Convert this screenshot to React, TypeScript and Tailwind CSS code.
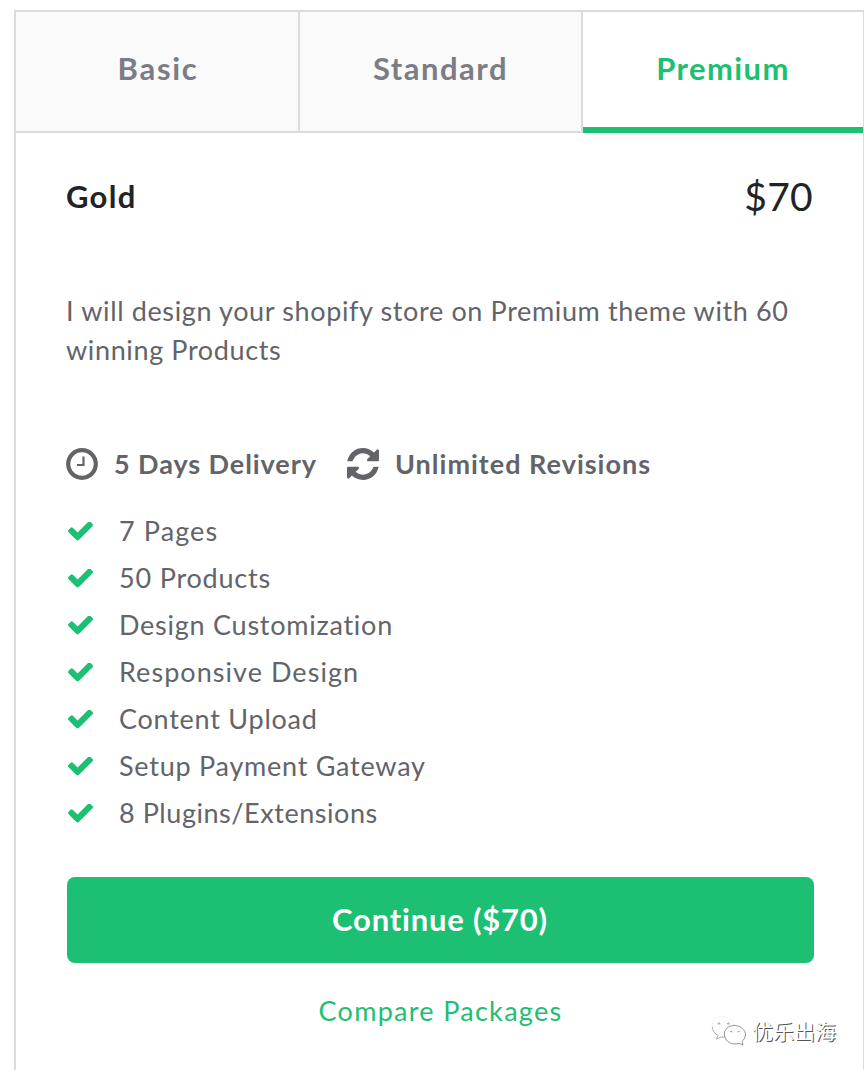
import { useState } from 'react';

const tabs = [
  { name: 'Basic', width: 'w-[284px]', tracking: 'pl-[2px] tracking-[1.7px]' },
  { name: 'Standard', width: 'w-[283px]', tracking: 'tracking-[1.5px]' },
  { name: 'Premium', width: 'w-[280px]', tracking: 'tracking-[1.4px]' },
];

const features = [
  { label: '7 Pages', tracking: 'tracking-[1.1px]' },
  { label: '50 Products', tracking: 'tracking-[0.8px]' },
  { label: 'Design Customization', tracking: 'tracking-[0.75px]' },
  { label: 'Responsive Design', tracking: 'tracking-[1.05px]' },
  { label: 'Content Upload', tracking: 'tracking-[0.75px]' },
  { label: 'Setup Payment Gateway', tracking: 'tracking-[0.75px]' },
  { label: '8 Plugins/Extensions', tracking: 'tracking-[0.55px]' },
];

function ClockIcon() {
  return (
    <svg className="size-8 shrink-0" viewBox="0 0 32 32" fill="none" stroke="currentColor">
      <circle cx="16" cy="16" r="13.8" strokeWidth="4.2" />
      <path d="M17.500 8.500V17H11" strokeWidth="2.2" />
    </svg>
  );
}

function RefreshIcon() {
  return (
    <svg className="size-8 shrink-0" viewBox="128 128 1536 1536" fill="currentColor">
      <path d="M1639 1056q0 5-1 7-64 268-268 434.5t-478 166.5q-146 0-282.5-55t-243.5-157l-129 129q-19 19-45 19t-45-19-19-45v-448q0-26 19-45t45-19h448q26 0 45 19t19 45-19 45l-137 137q71 66 161 102t187 36q134 0 250-65t186-179q11-17 53-117 8-23 30-23h192q13 0 22.5 9.5t9.5 22.5zm25-800v448q0 26-19 45t-45 19h-448q-26 0-45-19t-19-45 19-45l138-138q-148-137-349-137-134 0-250 65t-186 179q-11 17-53 117-8 23-30 23h-199q-13 0-22.5-9.5t-9.5-22.5v-7q65-268 270-434.5t480-166.5q146 0 284 55.5t245 156.5l130-129q19-19 45-19t45 19 19 45z" />
    </svg>
  );
}

function CheckIcon() {
  return (
    <svg className="h-[19px] w-[25px] shrink-0 text-[#1dbf73]" viewBox="121 398 1550 1124" fill="currentColor">
      <path d="M1671 566q0 40-28 68l-724 724-136 136q-28 28-68 28t-68-28l-136-136-362-362q-28-28-28-68t28-68l136-136q28-28 68-28t68 28l294 295 656-657q28-28 68-28t68 28l136 136q28 28 28 68z" />
    </svg>
  );
}

// Two overlapping chat bubbles, outline only
function Bubbles() {
  return (
    <svg className="h-[31px] w-9" viewBox="0 0 36 31" fill="none" strokeWidth="0.8">
      <path d="M1.300 13C0 5 7 1.500 12 1.500S22 5 23 10" stroke="#ddd" strokeDasharray="1 1" />
      <path d="M1.300 12Q2 18 7 20.500L5.500 24L10 22H14" stroke="#999" />
      <path d="M6.800 9q1.200-3 2.400 0M16.300 9q1.200-3 2.400 0M6.800 9h2.400M16.300 9h2.400" stroke="#999" />
      <path d="M13.500 20.500C12.500 14 18 10.500 23.500 10.500S35 15 34.500 20Q34 24 31 26.500L32 30L28 28.300C21 30.500 14.500 27 13.500 20.500Z" stroke="#777" fill="white" />
      <path d="M19 17q1.200-1.500 2.400 0M26.500 17q1.200-1.500 2.400 0" stroke="#777" />
    </svg>
  );
}

export default function App() {
  const [active, setActive] = useState('Premium');

  return (
    <div className="relative h-[1070px] w-[864px] overflow-hidden bg-white pt-[10px] pl-[14px] font-['Lato',sans-serif] text-[#62646a]">
      <div className="h-[1060px] w-[850px] border-t-2 border-r border-l-2 border-[#dadbdd]">
        {/* Package tabs */}
        <div className="flex h-[121px]">
          {tabs.map((tab) => (
            <button
              key={tab.name}
              onClick={() => setActive(tab.name)}
              className={`${tab.width} ${tab.tracking} text-[31px] font-bold ${
                active === tab.name
                  ? 'border-b-[6px] border-[#1dbf73] bg-white pb-[2px] text-[#1dbf73]'
                  : 'border-r-2 border-b-2 border-[#dadbdd] bg-[#fafafa] pb-[6px] text-[#7a7d85]'
              }`}
            >
              {tab.name}
            </button>
          ))}
        </div>

        <div className="pr-[50px] pl-[50px]">
          <div className="flex h-[130px] items-center justify-between pb-[3px] text-[#222325]">
            <h3 className="text-[31px] font-bold tracking-[1.3px]">Gold</h3>
            <span className="text-[39px] tracking-[0.3px]">$70</span>
          </div>

          <p className="mt-[28px] text-[27px] leading-[39px] tracking-[0.63px] whitespace-nowrap">
            I will design your shopify store on Premium theme with 60
            <br />
            winning Products
          </p>

          <div className="mt-[75px] flex h-10 items-center text-[27px] font-bold whitespace-nowrap">
            <ClockIcon />
            <span className="ml-4 w-[233px] tracking-[0.92px]">5 Days Delivery</span>
            <RefreshIcon />
            <span className="ml-4 tracking-[1px]">Unlimited Revisions</span>
          </div>

          <ul className="mt-[24px]">
            {features.map((feature) => (
              <li key={feature.label} className="flex h-[47px] items-center gap-[26px] pl-[2px] text-[27px]">
                <CheckIcon />
                <span className={feature.tracking}>{feature.label}</span>
              </li>
            ))}
          </ul>

          <button className="mt-[40px] ml-[0.5px] h-[86px] w-[747px] rounded-lg bg-[#1dbf73] pb-[2px] text-[31px] font-bold tracking-[0.8px] text-white">
            Continue ($70)
          </button>
          <a href="#" className="mt-[30px] block pl-[2px] text-center text-[27px] leading-9 tracking-[1.3px] text-[#1dbf73]">
            Compare Packages
          </a>
        </div>
      </div>

      {/* Watermark */}
      <div className="absolute top-[1015px] left-[711px] flex items-center gap-[5px]">
        <Bubbles />
        <span className="font-['Noto_Sans_CJK_SC',sans-serif] text-[21px] leading-[31px] text-white [text-shadow:1px_1px_0_#555]">
          优乐出海
        </span>
      </div>
    </div>
  );
}
